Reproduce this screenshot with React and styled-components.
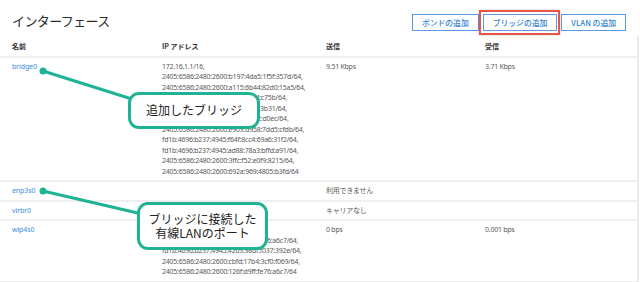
import styled, { createGlobalStyle } from 'styled-components';

const GlobalStyle = createGlobalStyle`
  html, body {
    margin: 0;
    padding: 0;
    background: #fff;
  }
  body {
    font-family: 'Noto Sans', 'Noto Sans CJK JP', sans-serif;
    color: #555;
  }
`;

const Page = styled.div`
  position: relative;
  width: 640px;
  height: 282px;
  overflow: hidden;
`;

const Header = styled.div`
  display: flex;
  align-items: center;
  justify-content: space-between;
  padding: 5px 14px 0 12px;
  height: 31px;
`;

const Title = styled.h1`
  margin: 0;
  font-family: 'Noto Sans CJK JP', sans-serif;
  font-size: 13px;
  font-weight: 400;
  color: #2b2b2b;
  letter-spacing: -0.6px;
`;

const Actions = styled.div`
  display: flex;
  gap: 4px;
  margin-top: 3px;
`;

const ActionButton = styled.button`
  position: relative;
  height: 17px;
  padding: 0 9px;
  border: 1px solid #5b9be0;
  background: #fff;
  color: #2f7fd6;
  font-family: 'Noto Sans CJK JP', sans-serif;
  font-size: 7.8px;
  font-weight: 500;
  cursor: pointer;
`;

const Highlight = styled.span`
  position: absolute;
  inset: -5px -4px -5px -5px;
  border: 2.5px solid #e5564c;
  box-shadow: 0 0 2px rgba(0, 0, 0, 0.25);
  pointer-events: none;
`;

const Table = styled.div`
  margin-right: 1px;
  border-right: 2px solid #ececec;
`;

const Row = styled.div`
  display: grid;
  grid-template-columns: 150px 164px 159px 1fr;
  padding: ${(p) => (p.$head ? '5px 0 4px 12px' : '4px 0 3px 12px')};
  border-bottom: 2px solid #efefef;
  font-size: 7px;
  line-height: 10.5px;
`;

const HeadCell = styled.div`
  font-family: 'Noto Sans CJK JP', sans-serif;
  font-weight: 700;
  font-size: 7px;
  color: #333;
`;

const Cell = styled.div`
  color: #5a5a5a;
  letter-spacing: -0.25px;
  font-family: 'Noto Sans', 'Noto Sans CJK JP', sans-serif;
`;

const NameLink = styled.a`
  color: #3a8de0;
  text-decoration: none;
  font-size: 7px;
  letter-spacing: -0.1px;
`;

const Callout = styled.div`
  position: absolute;
  left: ${(p) => p.$x}px;
  top: ${(p) => p.$y}px;
  width: ${(p) => p.$w}px;
  height: ${(p) => p.$h}px;
  box-sizing: border-box;
  border: 3px solid #1fb394;
  border-radius: 11px;
  background: #fff;
  display: flex;
  align-items: center;
  justify-content: center;
  text-align: center;
  font-family: 'Noto Sans CJK JP', sans-serif;
  font-size: 12px;
  line-height: 14.5px;
  color: #222;
`;

const Overlay = styled.svg`
  position: absolute;
  left: 0;
  top: 0;
  pointer-events: none;
`;

const rows = [
  {
    name: 'bridge0',
    ips: [
      '172.16.1.1/16,',
      '2405:6586:2480:2600:b197:4da5:1f5f:357d/64,',
      '2405:6586:2480:2600:a115:6b44:82d0:15a5/64,',
      '2405:6586:2480:2600:5c93:bc64:c75b/64,',
      '2405:6586:2480:2600:8f13:86aa:3b31/64,',
      '2405:6586:2480:2600:e71d:6b72:d0ec/64,',
      '2405:6586:2480:2600:e903:d958:7dd5:cfdb/64,',
      'fd1b:4696:b237:4945:f64f:8cc4:69a6:31f2/64,',
      'fd1b:4696:b237:4945:ad88:78a3:bffd:a91/64,',
      '2405:6586:2480:2600:3ffc:f52:e0f9:8215/64,',
      '2405:6586:2480:2600:692a:969:4805:b3fd/64',
    ],
    tx: '9.51 Kbps',
    rx: '3.71 Kbps',
  },
  { name: 'enp3s0', ips: [], tx: '利用できません', rx: '' },
  { name: 'virbr0', ips: [], tx: 'キャリアなし', rx: '' },
  {
    name: 'wlp4s0',
    ips: [
      '192.168.1.23/24,',
      '2405:6586:2480:2600:126f:d9ff:fe76:a6c7/64,',
      'fd1b:4696:b237:4945:4263:98df:f037:392e/64,',
      '2405:6586:2480:2600:cbfd:17b4:3cf0:f069/64,',
      '2405:6586:2480:2600:126f:d9ff:fe76:a6c7/64',
    ],
    tx: '0 bps',
    rx: '0.001 bps',
  },
];

export default function App() {
  return (
    <Page>
      <GlobalStyle />
      <Header>
        <Title>インターフェース</Title>
        <Actions>
          <ActionButton>ボンドの追加</ActionButton>
          <ActionButton>
            ブリッジの追加
            <Highlight />
          </ActionButton>
          <ActionButton>VLAN の追加</ActionButton>
        </Actions>
      </Header>
      <Table>
        <Row $head>
          <HeadCell>名前</HeadCell>
          <HeadCell>IP アドレス</HeadCell>
          <HeadCell>送信</HeadCell>
          <HeadCell>受信</HeadCell>
        </Row>
        {rows.map((r) => (
          <Row key={r.name}>
            <div>
              <NameLink href="#">{r.name}</NameLink>
            </div>
            <Cell>
              {r.ips.map((ip, i) => (
                <div key={i}>{ip}</div>
              ))}
            </Cell>
            <Cell>{r.tx}</Cell>
            <Cell>{r.rx}</Cell>
          </Row>
        ))}
      </Table>

      <Overlay width="640" height="282">
        <g stroke="#1fb394" strokeWidth="3" fill="#1fb394">
          <line x1="43" y1="71" x2="135" y2="100" />
          <circle cx="43" cy="71" r="3.5" stroke="none" />
          <line x1="43" y1="191" x2="142" y2="214" />
          <circle cx="43" cy="191" r="3.5" stroke="none" />
        </g>
      </Overlay>
      <Callout $x={128} $y={92} $w={132} $h={37}>
        追加したブリッジ
      </Callout>
      <Callout $x={137} $y={202} $w={131} $h={48}>
        ブリッジに接続した
        <br />
        有線LANのポート
      </Callout>
    </Page>
  );
}
